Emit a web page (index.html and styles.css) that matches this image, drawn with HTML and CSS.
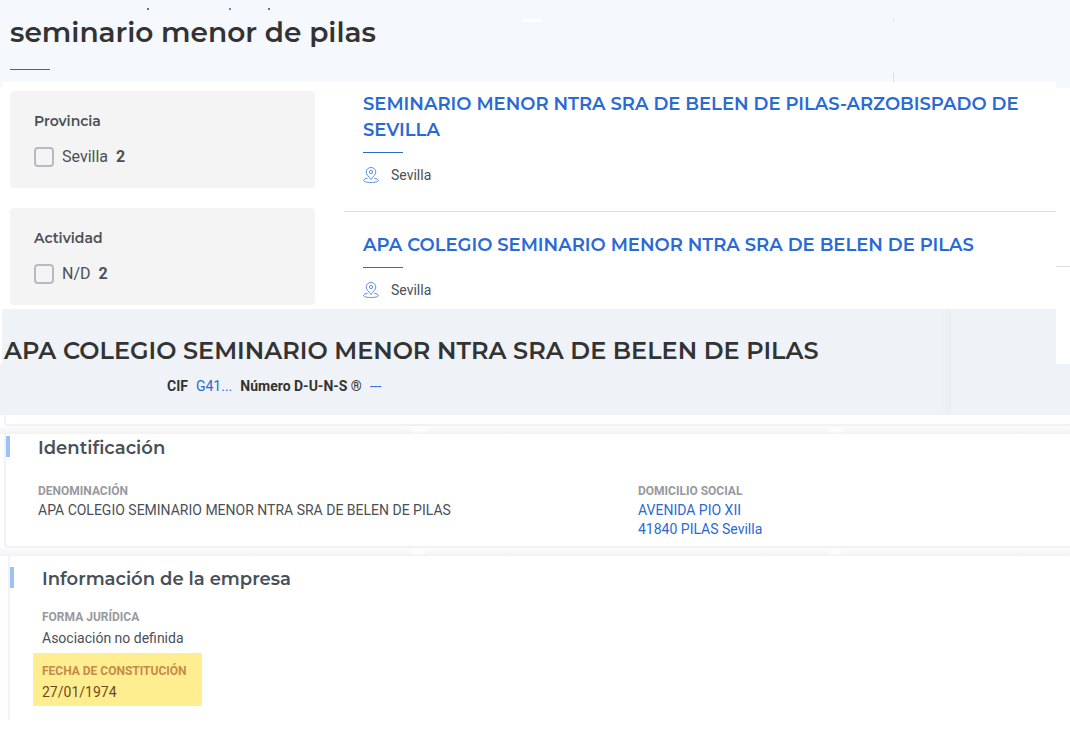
FILE: index.html
```html
<!DOCTYPE html>
<html lang="es">
<head>
<meta charset="utf-8">
<meta name="viewport" content="width=device-width, initial-scale=1">
<title>seminario menor de pilas</title>
<link rel="stylesheet" href="styles.css">
</head>
<body>
<svg class="sprite" aria-hidden="true">
  <symbol id="pin" viewBox="0 0 16 16">
    <path d="M8 12.5C6 9.7 3.2 7.600 3.200 5a4.800 4.500 0 0 1 9.600 0C12.800 7.600 10 9.700 8 12.500Z"/>
    <circle cx="8" cy="5" r="1.600"/>
    <path d="M4.600 11.200C2.300 11.700.600 12.500.600 13.500c0 1.200 3.300 2 7.400 2s7.400-.8 7.400-2c0-1-1.700-1.800-4-2.300"/>
  </symbol>
</svg>

<header class="search-header">
  <span class="mark mark-a"></span><span class="mark mark-b"></span><span class="mark mark-c"></span>
  <span class="notch"></span>
  <span class="divider divider-top"></span><span class="divider divider-bottom"></span>
  <h1 class="search-title">seminario menor de pilas</h1>
</header>

<main>
  <div class="search-body">
    <aside class="filters">
      <section class="filter">
        <h2 class="filter-title">Provincia</h2>
        <label class="option"><input type="checkbox" class="check"><span>Sevilla</span><b>2</b></label>
      </section>
      <section class="filter">
        <h2 class="filter-title">Actividad</h2>
        <label class="option"><input type="checkbox" class="check"><span>N/D</span><b>2</b></label>
      </section>
    </aside>
    <div class="results">
      <article class="result">
        <h2 class="result-title"><a href="#">SEMINARIO MENOR NTRA SRA DE BELEN DE PILAS-ARZOBISPADO DE SEVILLA</a></h2>
        <p class="place"><svg class="pin"><use href="#pin"/></svg>Sevilla</p>
      </article>
      <article class="result">
        <h2 class="result-title"><a href="#">APA COLEGIO SEMINARIO MENOR NTRA SRA DE BELEN DE PILAS</a></h2>
        <p class="place"><svg class="pin"><use href="#pin"/></svg>Sevilla</p>
      </article>
    </div>
    <span class="edge-line"></span>
  </div>

  <section class="company">
    <span class="fold"></span>
    <h1 class="company-title">APA COLEGIO SEMINARIO MENOR NTRA SRA DE BELEN DE PILAS</h1>
    <p class="company-ids"><b>CIF</b><a href="#">G41...</a><b>Número D-U-N-S ®</b><a href="#">---</a></p>
  </section>

  <div class="card-end"></div>
  <div class="card-gap"></div>
  <section class="card identity">
    <h2 class="card-title">Identificación</h2>
    <dl class="fields two">
      <div>
        <dt>DENOMINACIÓN</dt>
        <dd>APA COLEGIO SEMINARIO MENOR NTRA SRA DE BELEN DE PILAS</dd>
      </div>
      <div>
        <dt>DOMICILIO SOCIAL</dt>
        <dd><a href="#">AVENIDA PIO XII<br>41840 PILAS Sevilla</a></dd>
      </div>
    </dl>
  </section>
  <div class="card-gap"></div>
  <section class="card info">
    <h2 class="card-title">Información de la empresa</h2>
    <dl class="fields">
      <div>
        <dt>FORMA JURÍDICA</dt>
        <dd>Asociación no definida</dd>
      </div>
      <div class="highlight">
        <dt>FECHA DE CONSTITUCIÓN</dt>
        <dd>27/01/1974</dd>
      </div>
    </dl>
  </section>
</main>
</body>
</html>
```
FILE: styles.css
```css
* { box-sizing: border-box; }

body {
  margin: 0;
  background: #fff;
  color: #495057;
  font: 14px/20px Roboto, "Liberation Sans", sans-serif;
}

h1, h2, p, dl, dd { margin: 0; }

h1, h2 { font-family: Nexa, Montserrat, Inter, sans-serif; font-weight: 700; }

a { color: #2a6ad4; text-decoration: none; }

.sprite { position: absolute; width: 0; height: 0; }

.search-header {
  position: relative;
  height: 88px;
  padding: 14px 10px 0;
  background: #f5f8fd;
}

.search-title {
  color: #333;
  font-size: 28px;
  line-height: 36px;
  font-weight: 600;
}

.search-title::after {
  content: "";
  display: block;
  width: 40px;
  height: 1px;
  margin-top: 19px;
  background: #2a6ad4;
}

.mark { position: absolute; top: 8px; width: 2px; height: 2px; background: #6c7480; }
.mark-a { left: 147px; }
.mark-b { left: 229px; background: #5a8ad8; }
.mark-c { left: 268px; }

.notch {
  position: absolute;
  top: 19px;
  left: 522px;
  width: 20px;
  height: 3px;
  border-radius: 1px;
  background: #fff;
}

.divider { position: absolute; left: 893px; width: 1px; background: #dcdfe3; }
.divider-top { top: 19px; height: 3px; }
.divider-bottom { top: 73px; height: 9px; }

.search-body {
  position: relative;
  display: grid;
  grid-template-columns: 305px 1fr;
  gap: 29px;
  margin: -6px 14px 0 2px;
  padding: 9px 0 4px 8px;
  background: #fff;
}

.filters { display: grid; gap: 20px; align-content: start; }

.filter {
  padding: 20px 24px 21px;
  border-radius: 4px;
  background: #f4f4f4;
}

.filter-title { font-size: 14px; line-height: 20px; font-weight: 600; }

.option {
  display: flex;
  align-items: center;
  gap: 8px;
  margin-top: 16px;
  font-size: 16px;
}

.check {
  appearance: none;
  width: 20px;
  height: 20px;
  margin: 0;
  border: 2px solid #b9babf;
  border-radius: 4px;
}

.result { padding: 0 19px 26px; }

.result + .result { padding: 20px 19px 0; border-top: 1px solid #dcdee0; }

.result-title { font-size: 18px; line-height: 26px; font-weight: 600; }

.result-title::after {
  content: "";
  display: block;
  width: 40px;
  height: 1px;
  margin: 9px 0 12px;
  background: #2a6ad4;
}

.place { display: flex; align-items: center; gap: 12px; }

.pin { width: 16px; height: 16px; fill: none; stroke: #5b90e4; }

.edge-line {
  position: absolute;
  top: 184px;
  left: 100%;
  width: 14px;
  height: 1px;
  background: #dcdee0;
}

.company {
  position: relative;
  min-height: 106px;
  padding: 26px 4px 18px;
  background:
    linear-gradient(#fff, #fff) 0 0 / 2px 55px no-repeat,
    linear-gradient(#fff, #fff) 100% 0 / 14px 55px no-repeat,
    #eff3f8;
}

.fold {
  position: absolute;
  top: 0;
  bottom: 0;
  left: 941px;
  width: 10px;
  background: linear-gradient(90deg, #eff3f8, #ebeff4);
}

.company-title {
  position: relative;
  color: #333;
  font-size: 24px;
  line-height: 32px;
  font-weight: 600;
}

.company-ids {
  display: flex;
  gap: 8px;
  margin: 9px 0 0 163px;
  color: #333;
}

.card-end {
  height: 11px;
  margin-left: 4px;
  border: solid #eff3f8;
  border-width: 0 0 2px 2px;
  border-radius: 0 0 0 4px;
}

.card-gap {
  height: 8px;
  background:
    radial-gradient(ellipse at center, #fff, #fff0 70%) 405px 0 / 26px 8px no-repeat,
    radial-gradient(ellipse at center, #fff, #fff0 70%) 823px 0 / 26px 8px no-repeat,
    linear-gradient(#fcfcfc, #f2f2f2);
}

.card {
  margin-left: 4px;
  border-left: 2px solid #eff3f8;
}

.identity {
  padding: 2px 0 7px;
  border-bottom: 2px solid #eff3f8;
  border-radius: 0 0 0 4px;
}

.info { min-height: 164px; margin-left: 8px; padding-top: 11px; }

.card-title {
  padding-left: 32px;
  background: linear-gradient(#9cc2f5, #9cc2f5) 0 0 / 4px 21px no-repeat;
  font-size: 18px;
  line-height: 24px;
  font-weight: 600;
}

.fields { padding-left: 32px; }

.two { display: grid; grid-template-columns: 600px 1fr; margin-top: 21px; }

.fields dt {
  color: #97999d;
  font-size: 12px;
  line-height: 20px;
  font-weight: 700;
}

.fields dd { line-height: 19px; }

.info .fields { display: grid; justify-items: start; gap: 4px; margin-top: 16px; }

.info dd { line-height: 22px; }

.highlight {
  margin-left: -9px;
  padding: 8px 15px 3px 9px;
  background: #ffee8f;
}

.fields .highlight dt { color: #c58a4b; }
.highlight dd { color: #704920; }
```
